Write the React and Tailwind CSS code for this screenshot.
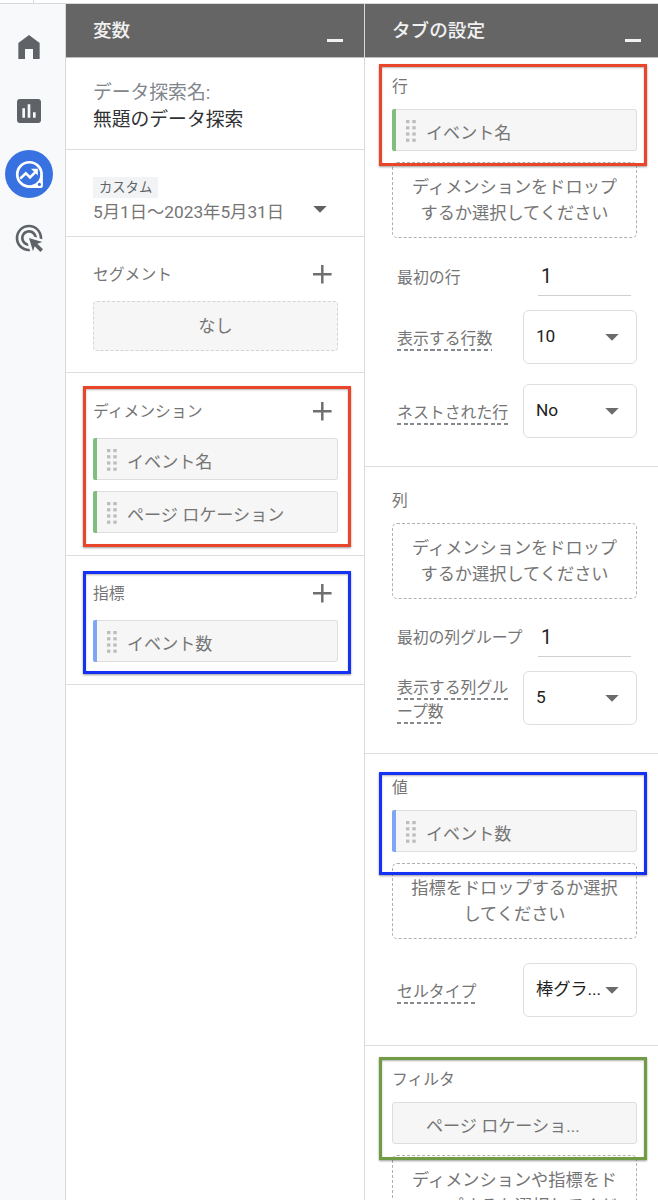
import React from 'react';

const Plus = () => (
  <svg width="20" height="20" viewBox="0 0 20 20" className="shrink-0">
    <path d="M10.3 .9v18.6M1 10.2h18.6" stroke="#6f6f6f" strokeWidth="2.5" fill="none" />
  </svg>
);

const Caret = ({ className = '' }) => (
  <svg width="14" height="7" viewBox="0 0 14 7" className={`shrink-0 ${className}`}>
    <path d="M.3 0h13.4L7 6.8z" fill="currentColor" />
  </svg>
);

const Grip = () => (
  <svg width="10" height="22" viewBox="0 0 10 22" className="shrink-0">
    {[0, 6.2, 12.4, 18.6].map((y) => (
      <g key={y} fill="#bdbdbd">
        <rect x="0" y={y} width="3.4" height="3.2" />
        <rect x="6.3" y={y} width="3.4" height="3.2" />
      </g>
    ))}
  </svg>
);

const chipBars = {
  green: 'bg-[#81bd7c]',
  blue: 'bg-[#7ea6f4]',
};

const Chip = ({ label, color }) => (
  <div className="flex h-[42px]">
    {color && <div className={`w-1 shrink-0 rounded-l-[2px] ${chipBars[color]}`} />}
    <div
      className={`flex flex-1 items-center border border-[#dedede] bg-[#f6f6f6] ${
        color ? 'rounded-r-[3px] border-l-0 pl-[10px]' : 'rounded-[3px] pl-[13px]'
      }`}
    >
      <div className="flex w-[20px] pt-0.5">{color && <Grip />}</div>
      <span className="pt-[6px] text-[17.1px] leading-[26px] text-[#757575]">{label}</span>
    </div>
  </div>
);

const frames = {
  red: 'border-[#e8452a]',
  blue: 'border-[#1431f5]',
  green: 'border-[#719c43]',
};

// Annotation frame drawn over the content of a section
const Frame = ({ color, className }) => (
  <div
    className={`pointer-events-none absolute z-10 w-[268px] border-3 shadow-[0_1px_2px_rgba(0,0,0,0.4),inset_0_1px_2px_rgba(0,0,0,0.3)] ${frames[color]} ${className}`}
  />
);

const DropZone = ({ lines }) => (
  <div className="mt-[11px] h-[76px] rounded-[5px] border border-dashed border-[#b0b0b0] pt-[11px] text-center text-[17.2px] leading-[26px] text-[#757575]">
    {lines.map((line) => (
      <div key={line} className="whitespace-nowrap">{line}</div>
    ))}
  </div>
);

const Title = ({ children }) => (
  <div className="relative top-px text-[15.8px] leading-6 text-[#757575]">{children}</div>
);

const Hint = ({ children }) => (
  <div className="w-fit whitespace-nowrap bg-[repeating-linear-gradient(90deg,#85898d_0_4px,transparent_4px_6.7px)] bg-[length:100%_2px] bg-bottom bg-no-repeat">
    {children}
  </div>
);

const Row = ({ children, className = '' }) => (
  <div className={`flex items-start justify-between pl-[5px] text-[15.9px] leading-6 text-[#757575] ${className}`}>
    {children}
  </div>
);

const NumberField = ({ value }) => (
  <div className="mr-[6px] h-[33px] w-[93px] border-b border-[#cfcfcf] pt-px pl-[3px] text-[19.5px] leading-[26px] text-[#212121]">
    {value}
  </div>
);

const Select = ({ value }) => (
  <div className="flex h-[54px] w-[114px] items-center justify-between rounded-[6px] border border-[#dedede] pr-[17px] pl-3 text-[17.3px] text-[#212121]">
    <span className="whitespace-nowrap pb-0.5 tracking-[-0.1px]">{value}</span>
    <Caret className="mt-px text-[#6b6b6b]" />
  </div>
);

const PanelHeader = ({ title, className }) => (
  <div className={`flex h-[54px] justify-between border-b border-[#bdbdbd] bg-[#656565] pl-[27px] text-[18.6px] font-medium text-[#f1f1f1] ${className}`}>
    <span className="pt-[13px] leading-7">{title}</span>
    <div className="mt-[35px] h-[3px] w-4 bg-[#f1f1f1]" />
  </div>
);

const Sidebar = () => (
  <nav className="flex w-[66px] shrink-0 flex-col border-r border-[#d8d9db] bg-[#f8f9fb] pl-[5px] text-[#5f6368]">
    <svg width="32" height="32" viewBox="0 0 24 24" fill="currentColor" className="mt-[27px] ml-2">
      <path d="M4 21V9l8-6 8 6v12h-5v-7.5H9V21z" />
    </svg>
    <svg width="32" height="32" viewBox="0 0 24 24" fill="currentColor" className="mt-8 ml-2">
      <path d="M19 3H5c-1.1 0-2 .9-2 2v14c0 1.1.9 2 2 2h14c1.1 0 2-.9 2-2V5c0-1.1-.9-2-2-2zM9 17H7v-7h2v7zm4 0h-2V7h2v10zm4 0h-2v-4h2v4z" />
    </svg>
    <div className="mt-[23px] h-12 w-12 rounded-full bg-[#3871e0]">
      <svg width="48" height="48" viewBox="0 0 48 48" fill="none">
        <path d="M24.4 10.9a13.5 13.5 0 0 0 0 27H36c1.1 0 1.9-.8 1.9-1.9V24.4a13.5 13.5 0 0 0-13.5-13.5z" fill="#fff" />
        <circle cx="24.4" cy="24.4" r="10.8" fill="#3871e0" />
        <circle cx="34.4" cy="34.4" r="1.6" fill="#3871e0" />
        <path d="M15.2 28.6l5.6-5.4 4.2 4.2 6.6-6.6" stroke="#fff" strokeWidth="2.6" />
        <path d="M26 18.8h6.8v6.8z" fill="#fff" />
      </svg>
    </div>
    <svg width="32" height="32" viewBox="0 0 24 24" fill="currentColor" className="mt-6 ml-2">
      <path d="M11.71 17.99C8.53 17.84 6 15.22 6 12c0-3.31 2.69-6 6-6 3.22 0 5.84 2.53 5.99 5.71l-2.1-.63C15.48 9.31 13.89 8 12 8c-2.21 0-4 1.79-4 4 0 1.89 1.31 3.48 3.08 3.89l.63 2.1zM22 12c0 .3-.01.6-.04.9l-1.97-.59c.01-.1.01-.21.01-.31 0-4.42-3.58-8-8-8s-8 3.58-8 8 3.58 8 8 8c.1 0 .21 0 .31-.01l.59 1.97c-.3.03-.6.04-.9.04-5.52 0-10-4.48-10-10S6.48 2 12 2s10 4.48 10 10zm-3.77 4.26L22 15l-10-3 3 10 1.26-3.77 4.27 4.27 1.98-1.98-4.28-4.26z" />
    </svg>
  </nav>
);

const Variables = () => (
  <section className="w-[299px] shrink-0 border-r border-[#d8d9db]">
    <PanelHeader title="変数" className="pr-[21px]" />
    <div className="h-[92px] border-b border-[#dedede] pt-[22px] pl-[27px] text-[18.8px] leading-[27px]">
      <div className="text-[#80868b]">データ探索名:</div>
      <div className="text-[#303134]">無題のデータ探索</div>
    </div>
    <div className="flex h-[87px] justify-between border-b border-[#dedede] pr-[37px] pl-[27px]">
      <div className="pt-[27px]">
        <div className="w-fit bg-[#f1f3f4] px-[6px] text-[13.3px] leading-[21px] text-[#5f6368]">カスタム</div>
        <div className="pt-px text-[17.3px] leading-[26px] text-[#757575]">5月1日〜2023年5月31日</div>
      </div>
      <Caret className="mt-[56px] text-[#5f6368]" />
    </div>
    <div className="h-[136px] border-b border-[#dedede] pt-[25px] pr-[26px] pl-[27px]">
      <div className="flex items-center justify-between pr-[6px]">
        <Title>セグメント</Title>
        <Plus />
      </div>
      <div className="mt-[15px] h-[50px] rounded-[4px] border border-dashed border-[#d4d4d4] bg-[#f6f6f6] text-center text-[17.2px] leading-[48px] text-[#757575]">
        なし
      </div>
    </div>
    <div className="relative h-[183px] border-b border-[#dedede] pt-[26px] pr-[26px] pl-[27px]">
      <div className="mb-[15px] flex items-center justify-between pr-[6px]">
        <Title>ディメンション</Title>
        <Plus />
      </div>
      <div className="flex flex-col gap-[11px]">
        <Chip label="イベント名" color="green" />
        <Chip label="ページ ロケーション" color="green" />
      </div>
      <Frame color="red" className="top-[13px] left-[17px] h-[161px]" />
    </div>
    <div className="relative h-[129px] border-b border-[#dedede] pt-[25px] pr-[26px] pl-[27px]">
      <div className="mb-[15px] flex items-center justify-between pr-[6px]">
        <Title>指標</Title>
        <Plus />
      </div>
      <Chip label="イベント数" color="blue" />
      <Frame color="blue" className="top-[15px] left-[17px] h-[103px]" />
    </div>
  </section>
);

const TabSettings = () => (
  <section className="min-w-0 flex-1">
    <PanelHeader title="タブの設定" className="pr-[17px]" />
    <div className="relative h-[409px] border-b border-[#dedede] pt-4 pr-[21px] pl-[27px]">
      <div className="mb-[11px]"><Title>行</Title></div>
      <Chip label="イベント名" color="green" />
      <DropZone lines={['ディメンションをドロップ', 'するか選択してください']} />
      <Row className="mt-[25px]">
        <span className="pt-[3px]">最初の行</span>
        <NumberField value="1" />
      </Row>
      <Row className="mt-[14px]">
        <div className="pt-[17px]"><Hint>表示する行数</Hint></div>
        <Select value="10" />
      </Row>
      <Row className="mt-[20px]">
        <div className="pt-[17px]"><Hint>ネストされた行</Hint></div>
        <Select value="No" />
      </Row>
      <Frame color="red" className="top-[6px] left-[14px] h-[102px]" />
    </div>
    <div className="h-[287px] border-b border-[#dedede] pt-[21px] pr-[21px] pl-[27px]">
      <Title>列</Title>
      <DropZone lines={['ディメンションをドロップ', 'するか選択してください']} />
      <Row className="mt-[25px]">
        <span className="pt-[2px] whitespace-nowrap tracking-[-0.1px]">最初の列グループ</span>
        <NumberField value="1" />
      </Row>
      <Row className="mt-[14px]">
        <div className="pt-[5px]">
          <Hint>表示する列グル</Hint>
          <Hint>ープ数</Hint>
        </div>
        <Select value="5" />
      </Row>
    </div>
    <div className="relative h-[292px] border-b border-[#dedede] pt-[21px] pr-[21px] pl-[27px]">
      <div className="mb-[11px]"><Title>値</Title></div>
      <Chip label="イベント数" color="blue" />
      <DropZone lines={['指標をドロップするか選択', 'してください']} />
      <Row className="mt-6">
        <div className="pt-[17px]"><Hint>セルタイプ</Hint></div>
        <Select value="棒グラ..." />
      </Row>
      <Frame color="blue" className="top-[18px] left-[14px] h-[103px]" />
    </div>
    <div className="relative pt-[21px] pr-[21px] pl-[27px]">
      <div className="mb-[11px]"><Title>フィルタ</Title></div>
      <Chip label="ページ ロケーショ..." />
      <DropZone lines={['ディメンションや指標をド', 'ロップするか選択してくだ']} />
      <Frame color="green" className="top-[11px] left-[14px] h-[103px]" />
    </div>
  </section>
);

const App = () => {
  return (
    <div className="flex h-[1200px] w-[658px] flex-col overflow-hidden bg-white font-[Roboto,'Noto_Sans_CJK_JP',sans-serif]">
      <div className="h-1 shrink-0 border-b border-[#d8d9db]">
        <div className="ml-[33px] h-full w-px bg-[#d8d9db]" />
      </div>
      <div className="flex min-h-0 flex-1">
        <Sidebar />
        <Variables />
        <TabSettings />
      </div>
    </div>
  );
};

export default App;
